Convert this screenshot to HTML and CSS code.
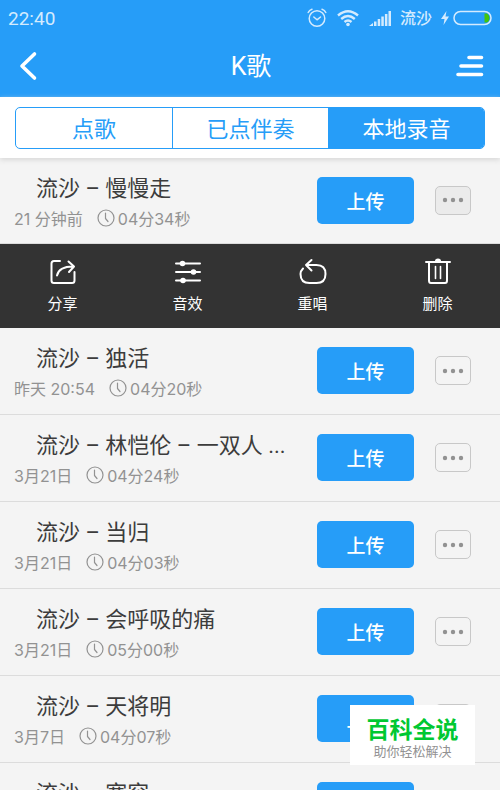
FILE: index.html
```
<!DOCTYPE html>
<html lang="zh-CN">
<head>
<meta charset="utf-8">
<meta name="viewport" content="width=device-width, initial-scale=1">
<title>K歌</title>
<link rel="stylesheet" href="styles.css">
</head>
<body>
<svg class="defs" aria-hidden="true">
  <symbol id="clock" viewBox="0 0 18 18"><circle cx="9" cy="9" r="8"/><path d="M8.500 4v5.500l2.500 3"/></symbol>
  <symbol id="dots" viewBox="0 0 22 6"><circle cx="3" cy="3" r="2.200"/><circle cx="11" cy="3" r="2.200"/><circle cx="19" cy="3" r="2.200"/></symbol>
</svg>
<header class="header">
  <div class="status">
    <span class="time">22:40</span>
    <svg class="alarm" width="20" height="20" viewBox="0 0 20 20"><circle cx="10" cy="10.500" r="7.800"/><path d="M6.800 9l3.200 2.800L13.500 9M1.200 4.500Q2.200 2 5 1.200M18.800 4.500Q17.800 2 15 1.200"/></svg>
    <svg class="wifi" width="22" height="18" viewBox="0 0 22 18"><path d="M1 6.500q10-8.500 20 0M4.200 10q6.800-6 13.600 0M7.500 13q3.500-3 7 0"/><circle cx="11" cy="15.500" r="1.800"/></svg>
    <svg class="signal" width="22" height="16" viewBox="0 0 22 16"><path d="M0 16l4-3v3zM5 11.500h2.500V16H5zM8.700 9h2.500v7H8.700zM12.300 6.500h2.500V16h-2.500zM15.900 4h2.500v12h-2.500zM19.500 1H22v15h-2.500z"/></svg>
    <span class="carrier">流沙</span>
    <svg class="bolt" width="8" height="16" viewBox="0 0 8 16"><path d="M5.500 1L0 9h3.500L2.500 15 8 6.500H4.500z"/></svg>
    <svg class="battery" width="40" height="16" viewBox="0 0 40 16"><rect x="1" y="1.500" width="37" height="13" rx="6.500"/><path d="M31.500 3.500h2.500q2.500 1.500 2.500 4.500t-2.500 4.500h-2.500z"/></svg>
  </div>
  <nav class="nav">
    <button class="icon-button" type="button" aria-label="返回"><svg width="20" height="30" viewBox="0 0 20 30"><path d="M16.500 3L4 15l12.500 12"/></svg></button>
    <h1>K歌</h1>
    <button class="icon-button menu" type="button" aria-label="菜单"><svg width="28" height="24" viewBox="0 0 28 24"><path d="M13 3.500h12.500M5 12h20.500M2 20.500h23.500"/></svg></button>
  </nav>
</header>
<main>
  <div class="tabs">
    <div class="segments">
      <button type="button">点歌</button>
      <button type="button">已点伴奏</button>
      <button type="button" class="selected" aria-pressed="true">本地录音</button>
    </div>
  </div>
  <ul class="list">
    <li>
      <div class="row first">
        <div class="info"><h2>流沙 – 慢慢走</h2><p><span>21 分钟前</span><svg class="clock"><use href="#clock"/></svg><span>04分34秒</span></p></div>
        <button class="upload" type="button">上传</button>
        <button class="more open" type="button" aria-label="更多"><svg><use href="#dots"/></svg></button>
      </div>
      <div class="actions">
        <button type="button"><svg viewBox="0 0 28 28"><path d="M11 3H5Q2.500 3 2.500 5.500v17Q2.500 25 5 25h18q2.500 0 2.500-2.500V14M8 17.500Q10 8.500 24 8.500M19.500 3.500L25 8.500 20 14"/></svg>分享</button>
        <button type="button"><svg viewBox="0 0 28 28"><path d="M2 5.500h24M2 14h24M2 22.500h24"/><g class="fill"><circle cx="8.500" cy="5.500" r="2.800"/><circle cx="19.500" cy="14" r="2.800"/><circle cx="9" cy="22.500" r="2.800"/></g></svg>音效</button>
        <button type="button"><svg viewBox="0 0 28 28"><path d="M4 10.500Q1.500 13 1.500 16q0 9 9 9h7q9 0 9-9t-9-9H7M12.500 2L7 7l5.500 5.500"/></svg>重唱</button>
        <button type="button"><svg viewBox="0 0 28 28"><path d="M2 4h24M5 5v17.500Q5 25 7 25h14q2 0 2-2.500V5"/><path class="thin" d="M11.500 8.500v12M16.500 8.500v12"/><path class="fill" d="M11 3q0-2.500 3-2.500T17 3z"/></svg>删除</button>
      </div>
    </li>
    <li><div class="row">
      <div class="info"><h2>流沙 – 独活</h2><p><span>昨天 20:54</span><svg class="clock"><use href="#clock"/></svg><span>04分20秒</span></p></div>
      <button class="upload" type="button">上传</button>
      <button class="more" type="button" aria-label="更多"><svg><use href="#dots"/></svg></button>
    </div></li>
    <li><div class="row">
      <div class="info"><h2>流沙 – 林恺伦 – 一双人 ...</h2><p><span>3月21日</span><svg class="clock"><use href="#clock"/></svg><span>04分24秒</span></p></div>
      <button class="upload" type="button">上传</button>
      <button class="more" type="button" aria-label="更多"><svg><use href="#dots"/></svg></button>
    </div></li>
    <li><div class="row">
      <div class="info"><h2>流沙 – 当归</h2><p><span>3月21日</span><svg class="clock"><use href="#clock"/></svg><span>04分03秒</span></p></div>
      <button class="upload" type="button">上传</button>
      <button class="more" type="button" aria-label="更多"><svg><use href="#dots"/></svg></button>
    </div></li>
    <li><div class="row">
      <div class="info"><h2>流沙 – 会呼吸的痛</h2><p><span>3月21日</span><svg class="clock"><use href="#clock"/></svg><span>05分00秒</span></p></div>
      <button class="upload" type="button">上传</button>
      <button class="more" type="button" aria-label="更多"><svg><use href="#dots"/></svg></button>
    </div></li>
    <li><div class="row">
      <div class="info"><h2>流沙 – 天将明</h2><p><span>3月7日</span><svg class="clock"><use href="#clock"/></svg><span>04分07秒</span></p></div>
      <button class="upload" type="button">上传</button>
      <button class="more" type="button" aria-label="更多"><svg><use href="#dots"/></svg></button>
    </div></li>
    <li><div class="row">
      <div class="info"><h2>流沙 – 宽容</h2></div>
      <button class="upload" type="button">上传</button>
      <button class="more" type="button" aria-label="更多"><svg><use href="#dots"/></svg></button>
    </div></li>
  </ul>
</main>
<aside class="brand"><strong>百科全说</strong><span>助你轻松解决</span></aside>
</body>
</html>
```
FILE: styles.css
```
* { box-sizing: border-box; }
body {
  margin: 0;
  height: 100vh;
  overflow: hidden;
  background: #f4f4f4;
  color: #3c3c3c;
  font-family: Roboto, "Noto Sans CJK SC", sans-serif;
}
h1, h2, p, ul { margin: 0; padding: 0; font-weight: 400; }
button { font: inherit; color: inherit; background: none; border: 0; padding: 0; }
svg { display: block; flex: none; fill: none; stroke: currentColor; stroke-linecap: round; stroke-linejoin: round; }
.defs { position: absolute; width: 0; height: 0; }

.header { background: #269df8; color: #fff; }
.status { display: flex; align-items: center; height: 36px; padding: 0 7px 0 8px; color: #d4ebfe; font-size: 16px; }
.time { margin-right: auto; font-size: 19px; }
.alarm { margin-right: 10px; stroke-width: 1.5; }
.wifi { margin-right: 10px; stroke-width: 2.4; stroke-linecap: butt; }
.wifi circle, .signal, .bolt { fill: currentColor; stroke: none; }
.signal { margin-right: 9px; }
.carrier { margin-right: 9px; font-weight: 500; font-family: "Noto Sans CJK SC", sans-serif; line-height: 24px; padding-bottom: 2px; }
.bolt { margin-right: 4px; }
.battery { stroke-width: 1.5; }
.battery path { fill: #43c50b; stroke: none; }

.nav { display: flex; align-items: center; justify-content: space-between; height: 61px; padding: 0 16px 2px 18px; }
.nav h1 { font-size: 25px; line-height: 36px; padding-top: 2px; }
.nav svg { stroke-width: 3.6; }
.icon-button { width: 28px; height: 40px; display: flex; align-items: center; }

.tabs { background: #fff; height: 61px; padding: 10px 15px; box-shadow: 0 2px 5px #d8d8d8; position: relative; }
.segments { display: grid; grid-template-columns: repeat(3, 1fr); height: 42px; border: 1px solid #269df8; border-radius: 5px; overflow: hidden; color: #269df8; font-size: 22px; }
.segments button { padding-bottom: 2px; }
.segments button + button { border-left: 1px solid #269df8; }
.segments .selected { background: #269df8; color: #fff; }

.list { list-style: none; }
.row { display: flex; align-items: center; height: 87px; padding: 0 29px 1px 14px; border-bottom: 1px solid #dcdcdc; }
.row.first { height: 86px; }
.info { flex: 1; min-width: 0; align-self: flex-start; padding-top: 15px; }
.info h2 { font-size: 22px; line-height: 32px; padding-left: 22px; white-space: nowrap; }
.info p { display: flex; align-items: center; font-family: Inter, "Noto Sans CJK SC", sans-serif; font-size: 16px; line-height: 28px; color: #929292; white-space: nowrap; }
.clock { width: 18px; height: 18px; margin: 0 3px 2px 14px; stroke-width: 1.2; }
.upload { width: 97px; height: 47px; margin-right: 21px; border-radius: 5px; background: #269df8; color: #fff; font-size: 19px; font-weight: 500; }
.more { display: grid; place-items: center; width: 36px; height: 29px; border: 1px solid #c8c8c8; border-radius: 5px; color: #929292; }
.more.open { background: #ebebeb; }
.more svg { width: 22px; height: 6px; fill: currentColor; stroke: none; }

.actions { display: grid; grid-template-columns: repeat(4, 1fr); height: 84px; background: #333; color: #fff; font-size: 15px; line-height: 22px; }
.actions button { display: flex; flex-direction: column; align-items: center; gap: 7px; padding-top: 14px; }
.actions svg { width: 28px; height: 28px; stroke-width: 2; }
.actions .thin { stroke-width: 1.6; }
.actions .fill { fill: currentColor; stroke: none; }

.brand { position: fixed; right: 25px; bottom: 25px; width: 125px; height: 60px; display: flex; flex-direction: column; align-items: center; background: #fff; padding-top: 12px; }
.brand strong { font-size: 23px; line-height: 27px; color: #00c832; font-weight: 700; }
.brand span { font-size: 13px; line-height: 16px; color: #929292; }
```
